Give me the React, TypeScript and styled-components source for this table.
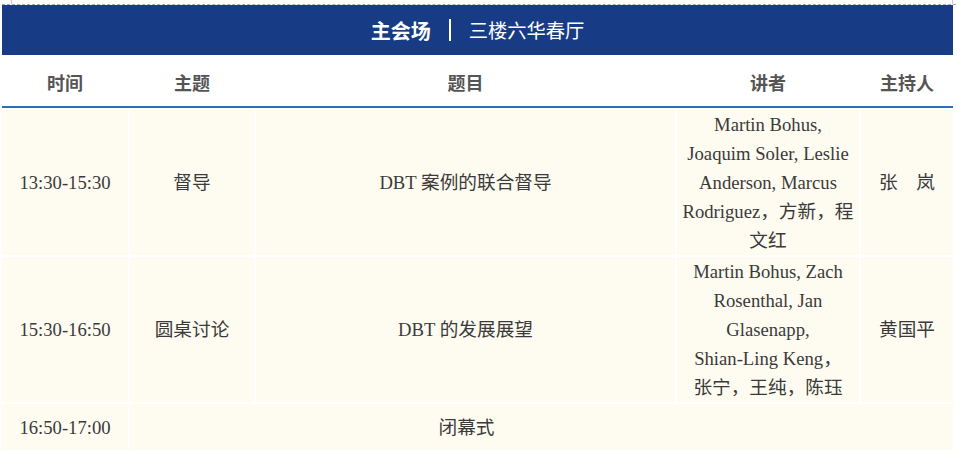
import React from "react";
import styled, { createGlobalStyle } from "styled-components";

const Global = createGlobalStyle`
  html, body { margin: 0; padding: 0; background: #ffffff; }
  body { font-family: "Liberation Serif", "Noto Sans CJK SC", serif; }
`;

const Frame = styled.div`
  position: relative;
  width: 957px;
  padding-top: 4px;
`;

const Tick = styled.span<{ $left: number }>`
  position: absolute;
  top: 0;
  left: ${(p) => p.$left}px;
  width: 1px;
  height: 4px;
  background: #c8c8c8;
`;

const Sheet = styled.div`
  margin-left: 2px;
  width: 954px;
  border-top: 1px dashed #a9adb5;
`;

const Banner = styled.div`
  width: 951px;
  height: 50px;
  background: #173b84;
  color: #ffffff;
  display: flex;
  align-items: center;
  justify-content: center;
  font-family: "Noto Sans CJK SC", sans-serif;
`;

const Hall = styled.span`
  font-size: 20px;
  font-weight: 700;
`;

const Divider = styled.span`
  display: inline-block;
  width: 2px;
  height: 22px;
  background: #ffffff;
  margin: 0 18px 0 18px;
`;

const Room = styled.span`
  font-size: 19.3px;
  font-weight: 400;
`;

const Grid = styled.div`
  width: 951px;
  display: grid;
  grid-template-columns: 126px 124px 419px 182px 92px;
  column-gap: 2px;
  row-gap: 2px;
  background: #ffffff;
`;

const HeadCell = styled.div`
  height: 51px;
  display: flex;
  align-items: center;
  justify-content: center;
  font-family: "Noto Sans CJK SC", sans-serif;
  font-weight: 700;
  font-size: 18px;
  color: #555555;
  padding-top: 3px;
  box-sizing: border-box;
`;

const HeadRule = styled.div`
  grid-column: 1 / -1;
  height: 2px;
  margin-top: -2px;
  background: #2e6fb7;
`;

const Cell = styled.div<{ $span?: string; $padRight?: number; $top?: boolean }>`
  grid-column: ${(p) => p.$span ?? "auto"};
  background: #fefcf1;
  display: flex;
  align-items: ${(p) => (p.$top ? "flex-start" : "center")};
  justify-content: center;
  text-align: center;
  font-size: 18.67px;
  line-height: 29px;
  color: #3a3a3a;
  padding: ${(p) => (p.$top ? "9px" : "0")} ${(p) => p.$padRight ?? 8}px 0 8px;
  min-height: ${(p) => (p.$top ? "52px" : "auto")};
  box-sizing: border-box;
`;

const Lines = styled.div`
  display: flex;
  flex-direction: column;
  align-items: center;
  white-space: nowrap;
`;

const Line = styled.span`
  display: block;
  height: 29px;
  line-height: 29px;
`;

const rows = [
  {
    time: "13:30-15:30",
    topic: "督导",
    title: "DBT 案例的联合督导",
    speakers: [
      "Martin Bohus,",
      "Joaquim Soler, Leslie",
      "Anderson, Marcus",
      "Rodriguez，方新，程",
      "文红",
    ],
    host: "张　岚",
  },
  {
    time: "15:30-16:50",
    topic: "圆桌讨论",
    title: "DBT 的发展展望",
    speakers: [
      "Martin Bohus, Zach",
      "Rosenthal, Jan",
      "Glasenapp,",
      "Shian-Ling Keng，",
      "张宁，王纯，陈珏",
    ],
    host: "黄国平",
  },
];

export default function App() {
  return (
    <>
      <Global />
      <Frame>
        <Tick $left={11} />
        <Tick $left={952} />
        <Sheet>
          <Banner>
            <Hall>主会场</Hall>
            <Divider />
            <Room>三楼六华春厅</Room>
          </Banner>
          <Grid>
            <HeadCell>时间</HeadCell>
            <HeadCell>主题</HeadCell>
            <HeadCell>题目</HeadCell>
            <HeadCell>讲者</HeadCell>
            <HeadCell>主持人</HeadCell>
            <HeadRule />
            {rows.map((r) => (
              <React.Fragment key={r.time}>
                <Cell>{r.time}</Cell>
                <Cell>{r.topic}</Cell>
                <Cell>{r.title}</Cell>
                <Cell>
                  <Lines>
                    {r.speakers.map((s) => (
                      <Line key={s}>{s}</Line>
                    ))}
                  </Lines>
                </Cell>
                <Cell>{r.host}</Cell>
              </React.Fragment>
            ))}
            <Cell $top>16:50-17:00</Cell>
            <Cell $top $span="2 / -1" $padRight={158}>
              闭幕式
            </Cell>
          </Grid>
        </Sheet>
      </Frame>
    </>
  );
}
